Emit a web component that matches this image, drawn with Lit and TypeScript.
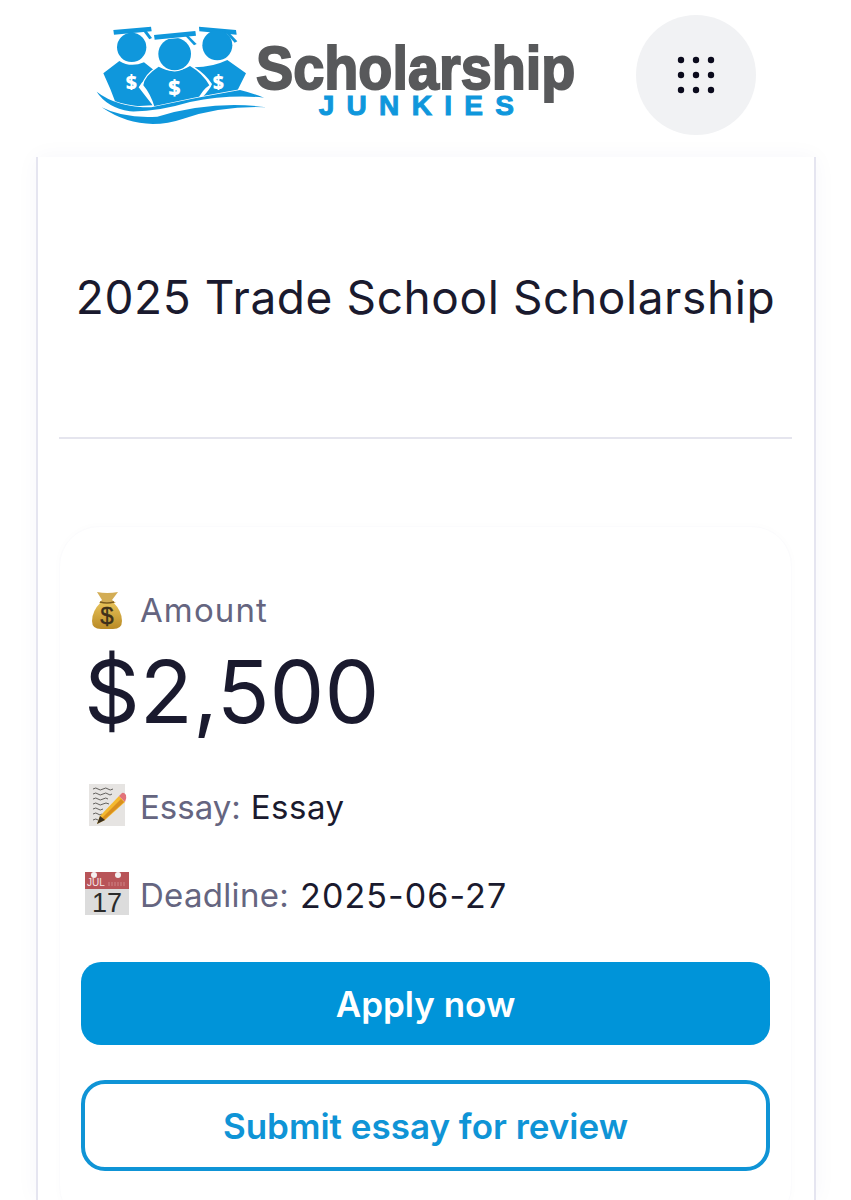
import { LitElement, html, css, svg } from "lit";
import { customElement } from "lit/decorators.js";

const logo = svg`<svg class="logo" viewBox="0 0 1560 390" width="520" height="130" aria-label="Scholarship Junkies">
  <g fill="#0f97dc">
    <path d="M100 60L213 50L215 64L102 74Z"/><path d="M198 60L216 84L208 88L190 64Z"/>
    <circle cx="155" cy="112" r="44"/>
    <path d="M357 50L468 60L470 74L358 64Z"/><path d="M440 60L472 94L464 98L432 62Z"/>
    <circle cx="412" cy="106" r="45"/>
    <path d="M118 153Q152 174 192 157L226 184Q192 205 176 232Q196 258 218 286L112 292Q92 236 70 190Z"/>
    <path d="M344 172Q396 172 442 150L498 190L470 246Q420 252 362 268Q392 236 396 222Q376 192 344 172Z"/>
    <path d="M236 170Q192 198 190 226Q212 252 224 292L352 272Q366 240 388 226Q368 190 330 168Q284 196 236 170Z" stroke="#fff" stroke-width="7" paint-order="stroke"/>
    <circle cx="284" cy="132" r="49" stroke="#fff" stroke-width="7" paint-order="stroke"/>
    <path d="M222 75L346 63L348 77L224 89Z" stroke="#fff" stroke-width="4" paint-order="stroke"/>
    <path d="M322 74L350 102L342 106L314 76Z"/>
    <path d="M50 245Q110 292 214 292Q350 262 480 240Q520 250 552 263Q450 252 330 276Q230 306 150 304Q80 292 50 245Z" stroke="#fff" stroke-width="4" paint-order="stroke"/>
    <path d="M65 292Q130 326 232 320Q400 270 562 292Q430 286 310 326Q180 370 65 292Z"/>
  </g>
  <g fill="#fff" font-family="'Open Sans', sans-serif" font-weight="800">
    <text x="154" y="236" font-size="58" text-anchor="middle">$</text>
    <text x="283" y="254" font-size="64" text-anchor="middle">$</text>
    <text x="415" y="236" font-size="58" text-anchor="middle">$</text>
  </g>
  <text x="528" y="237" font-family="'Liberation Sans', sans-serif" font-weight="700" font-size="186" fill="#58595b" stroke="#58595b" stroke-width="6" textLength="958" lengthAdjust="spacingAndGlyphs">Scholarship</text>
  <text x="716" y="315" font-family="'Liberation Sans', sans-serif" font-weight="700" font-size="84" fill="#0f97dc" stroke="#0f97dc" stroke-width="3" textLength="586" lengthAdjust="spacing">JUNKIES</text>
</svg>`;

const dots = svg`<svg width="38" height="38" viewBox="0 0 38 38" fill="#0a0a1c">
  ${[4, 19, 34].flatMap((y) => [4, 19, 34].map((x) => svg`<circle cx=${x} cy=${y} r="3.2"/>`))}
</svg>`;

const bag = svg`<svg class="ico" width="30" height="38" viewBox="0 0 30 38">
  <defs><linearGradient id="bagfill" x1="0" y1="0" x2="0" y2="1"><stop offset="0" stop-color="#e8c35a"/><stop offset="1" stop-color="#b98a25"/></linearGradient></defs>
  <path d="M5 1Q15 3 26 1L20 9L24 12H7L10 9Z" fill="#d3ad55"/>
  <path d="M9 11Q0 20 0 30Q0 38 9 38H21Q30 38 30 30Q30 20 21 11Z" fill="url(#bagfill)"/>
  <path d="M8 11Q15 13 22 11" stroke="#7c5b1e" stroke-width="1.6" fill="none"/>
  <text x="15" y="33" font-family="'Liberation Sans', sans-serif" font-size="24" font-weight="400" text-anchor="middle" fill="#3d2f1a" stroke="#3d2f1a" stroke-width=".4">$</text>
</svg>`;

const memo = svg`<svg class="ico" width="38" height="44" viewBox="0 0 38 44">
  <rect x="1" y="1" width="36" height="42" fill="#e6e4e2"/>
  <g stroke="#55524f" stroke-width=".9" fill="none">
    <path d="M5 6q3-2 5 0t5 0 5 0 5 0M5 11q3-2 5 0t5 0 5 0 4 0M5 16q3-2 5 0t5 0 5 0M5 21q3-2 5 0t5 0 6 0M5 26q3-2 5 0t5 0M5 31q3-2 5 0t4 0M5 37q3-2 5 0"/>
  </g>
  <path d="M31 13L37 19L17 37L9 41L12 33Z" fill="#f4b92f"/>
  <path d="M33 16L36 19L16 37L14 35Z" fill="#d98f1f"/>
  <path d="M31 13L34 10Q36 9 38 12Q39 15 37 19Z" fill="#e2737a"/>
  <path d="M9 41L12 33L17 37Z" fill="#3a3020"/>
</svg>`;

const cal = svg`<svg class="ico" width="44" height="44" viewBox="0 0 44 44">
  <rect x="0" y="17" width="44" height="27" fill="#dcdcdc"/>
  <rect x="0" y="1" width="44" height="17" fill="#b85458"/>
  <circle cx="9" cy="4" r="3" fill="#f4f0f0"/><circle cx="33" cy="4" r="3" fill="#f4f0f0"/>
  <text x="2" y="15" font-family="'Liberation Sans', sans-serif" font-size="10" fill="#f5e6e6">JUL</text>
  <path d="M24 15v-4M27 15v-4M30 15v-4M33 15v-4M36 15v-4M39 15v-4" stroke="#cf8487" stroke-width="1"/>
  <text x="22" y="41" font-family="'Liberation Sans', sans-serif" font-size="27" text-anchor="middle" fill="#2b2b2b">17</text>
</svg>`;

@customElement("app-root")
export class AppRoot extends LitElement {
  static styles = css`
    :host {
      display: block;
      height: 1200px;
      overflow: hidden;
      background: #fff;
      font-family: "Inter", "Open Sans", sans-serif;
      color: #1a1a2e;
    }
    .header {
      height: 157px;
      display: flex;
      align-items: flex-start;
      box-sizing: border-box;
      padding: 10px 0 0 80px;
      gap: 36px;
    }
    .logo { display: block; flex: none; overflow: visible; }
    .ico { display: block; flex: none; overflow: visible; }
    .menu {
      width: 120px;
      height: 120px;
      margin-top: 5px;
      border-radius: 50%;
      background: #f1f2f4;
      display: flex;
      align-items: center;
      justify-content: center;
      flex: none;
    }
    .shell {
      margin: 0 35px 0 36px;
      padding: 0 22px 0 21px;
      height: 1043px;
      box-sizing: border-box;
      border-left: 2px solid #e5e5f0;
      border-right: 2px solid #e5e5f0;
      box-shadow: 0 0 22px rgba(60, 60, 120, 0.04);
    }
    .title {
      height: 280px;
      margin: 0;
      display: flex;
      align-items: center;
      justify-content: center;
      font-size: 46px;
      letter-spacing: 0.6px;
      font-weight: 400;
      white-space: nowrap;
      border-bottom: 2px solid #e5e5ee;
      box-sizing: content-box;
    }
    .card {
      margin-top: 87px;
      height: 700px;
      box-sizing: border-box;
      padding: 60px 24px 0 21px;
      border: 1px solid #fbfbfd;
      border-radius: 40px;
      box-shadow: 0 0 10px rgba(60, 60, 120, 0.015);
    }
    .row { display: flex; align-items: center; }
    .label { color: #656580; font-size: 33px; }
    .value { font-size: 33px; color: #1a1a2e; }
    .date { font-size: 34px; letter-spacing: 1.1px; }
    .amount-row { height: 46px; padding-left: 11px; gap: 18px; }
    .amount-row .label { letter-spacing: 1.1px; }
    .amount {
      height: 106px;
      margin-top: 5px;
      padding-left: 3px;
      display: flex;
      align-items: center;
      font-size: 87px;
      line-height: 1;
      color: #1a1a2e;
    }
    .essay-row { height: 46px; margin-top: 40px; padding-left: 7px; gap: 14px; }
    .date-row { height: 46px; margin-top: 42px; padding-left: 4px; gap: 11px; }
    .essay-row .ico, .date-row .ico { margin-bottom: 4px; }
    .essay-row .label { margin-right: -4px; }
    .essay-row .value { letter-spacing: 0.5px; }
    .date-row .label { letter-spacing: 0.3px; }
    .btn {
      display: flex;
      align-items: center;
      justify-content: center;
      box-sizing: border-box;
      font-weight: 600;
      font-size: 35px;
      width: 689px;
    }
    .primary {
      margin-top: 44px;
      height: 83px;
      background: #0094d9;
      color: #fff;
      border-radius: 20px;
    }
    .secondary {
      margin-top: 35px;
      height: 91px;
      border: 4px solid #0f94d6;
      color: #0f94d6;
      border-radius: 24px;
      background: #fff;
    }
  `;

  render() {
    return html`
      <header class="header">
        ${logo}
        <div class="menu">${dots}</div>
      </header>
      <main class="shell">
        <h1 class="title">2025 Trade School Scholarship</h1>
        <section class="card">
          <div class="row amount-row">${bag}<span class="label">Amount</span></div>
          <div class="amount">$2,500</div>
          <div class="row essay-row">${memo}<span class="label">Essay:</span><span class="value">Essay</span></div>
          <div class="row date-row">${cal}<span class="label">Deadline:</span><span class="value date">2025-06-27</span></div>
          <div class="btn primary">Apply now</div>
          <div class="btn secondary">Submit essay for review</div>
        </section>
      </main>
    `;
  }
}
